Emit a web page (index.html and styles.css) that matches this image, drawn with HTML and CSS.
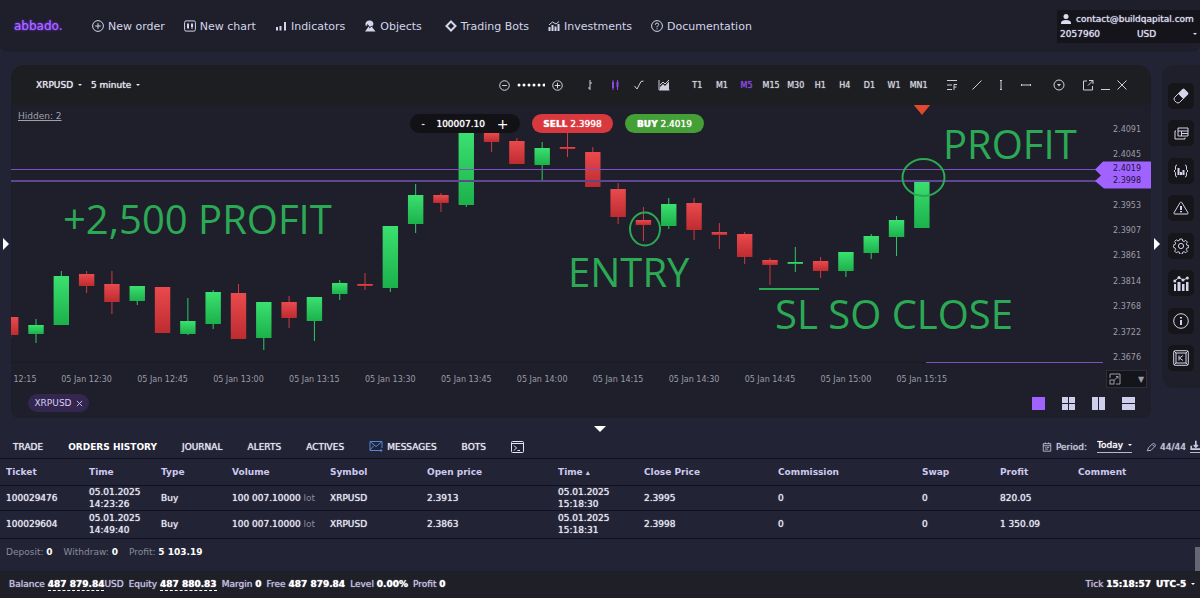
FILE: index.html
```html
<!DOCTYPE html>
<html lang="en">
<head>
    <meta charset="UTF-8">
    <meta name="viewport" content="width=device-width, initial-scale=1.0">
    <title>abbado. terminal</title>
    <link rel="stylesheet" href="styles.css">
</head>
<body>
    <header class="topbar">
        <a class="logo" href="#">abbado.</a>
        <nav>
            <a href="#"><svg class="icon" viewBox="0 0 12 12"><circle cx="6" cy="6" r="5.4"/><path d="M6 3.2v5.6M3.2 6h5.6"/></svg>New order</a>
            <a href="#"><svg class="icon" viewBox="0 0 12 12"><rect x=".6" y=".9" width="10.8" height="10.2" rx="1.5"/><path d="M4 3v6M8 3v6"/><path class="fill" d="M3 4h2v4H3zM7 4h2v3H7z"/></svg>New chart</a>
            <a href="#"><svg class="icon" viewBox="0 0 12 12"><path class="fill" d="M1 7h2v3.500H1zM4.500 6h2v4.500h-2zM9 2h2v8.500H9z"/></svg>Indicators</a>
            <a href="#"><svg class="icon" viewBox="0 0 12 12"><path class="fill" d="M1.500 5a4 4 0 0 1 8-1L8 7l3.500 4.500H1L5 6 3 5 2 6.500z"/><path class="cut" d="M5.500 6.500L3 4.500M5 8l3-2"/></svg>Objects</a>
            <a class="bots" href="#"><svg class="icon" viewBox="0 0 12 12"><path class="thick" d="M6 1.500L10.500 6 6 10.500 1.500 6z"/></svg>Trading Bots</a>
            <a href="#"><svg class="icon" viewBox="0 0 12 12"><path class="fill" d="M.5 7h2v4h-2zM3.500 5h2v6h-2zM6.500 6.500h2V11h-2zM9.500 4h2v7h-2z"/><path d="M1 5l3.500-3L8 4l3-2.500"/></svg>Investments</a>
            <a href="#"><svg class="icon" viewBox="0 0 12 12"><circle cx="6" cy="6" r="5.4"/><path d="M4.300 4.800Q4.400 3 6 3T7.700 4.700Q7.600 5.500 6.500 6Q6 6.300 6 7.300M6 8.300v1"/></svg>Documentation</a>
        </nav>
        <div class="account">
            <div class="email"><svg class="icon" viewBox="0 0 12 12"><circle class="fill" cx="6" cy="3.500" r="2.500"/><path class="fill" d="M1 11V9.500Q1.500 7 6 7t5 2.500V11z"/></svg>contact@buildqapital.com</div>
            <div class="wallet">
                <span>2057960</span>
                <label class="pick"><select aria-label="Account currency"><option>USD</option></select></label>
            </div>
        </div>
    </header>

    <main class="workspace">
        <button class="edge" aria-label="Open left panel"><svg viewBox="0 0 6 12"><path d="M0 0l6 6-6 6z"/></svg></button>

        <section class="panel">
            <div class="toolbar">
                <label class="pick"><select aria-label="Symbol"><option>XRPUSD</option></select></label>
                <label class="pick"><select aria-label="Period"><option>5 minute</option></select></label>
                <div class="zoom">
                    <button aria-label="Zoom out"><svg viewBox="0 0 12 12"><circle cx="6" cy="6" r="5.2"/><path d="M3.500 6h5"/></svg></button>
                    <svg class="dots" viewBox="0 0 28 4"><path d="M2 2h.01M7 2h.01M12 2h.01M17 2h.01M22 2h.01M27 2h.01"/></svg>
                    <button aria-label="Zoom in"><svg viewBox="0 0 12 12"><circle cx="6" cy="6" r="5.2"/><path d="M3 6h6M6 3v6"/></svg></button>
                </div>
                <div class="group four">
                    <button aria-label="Bars"><svg viewBox="0 0 12 12"><path d="M6 1v10M6 4h2M4 9h2"/></svg></button>
                    <button class="active" aria-label="Candles"><svg viewBox="0 0 12 12"><path d="M4 1v10M8.500 1v10"/><path class="thick" d="M4 3v6M8.500 3v5"/></svg></button>
                    <button aria-label="Line"><svg viewBox="0 0 12 12"><path d="M1.500 7L4 10l4-7.500 2.500-.5"/></svg></button>
                    <button aria-label="Area"><svg viewBox="0 0 12 12"><path d="M1 1v10h10.500M2 6l3-3 2 2 4-4"/><path class="fill" d="M2 8l3-3 2 2 4-4.500V11H2z"/></svg></button>
                </div>
                <div class="group ten">
                    <button>T1</button><button>M1</button><button class="active">M5</button><button>M15</button><button>M30</button>
                    <button>H1</button><button>H4</button><button>D1</button><button>W1</button><button>MN1</button>
                </div>
                <div class="group four">
                    <button aria-label="Fibonacci"><svg viewBox="0 0 12 12"><path d="M1 1.500h10M1 6h5M1 10.500h5M8 11V5.500h3M8 8h2.500"/></svg></button>
                    <button aria-label="Trend line"><svg viewBox="0 0 12 12"><path d="M1.500 10.500l9-9"/></svg></button>
                    <button aria-label="Vertical line"><svg viewBox="0 0 12 12"><path d="M6 1v10M5 1.500h2M5 10.500h2"/></svg></button>
                    <button aria-label="Horizontal line"><svg viewBox="0 0 12 12"><path d="M1 6h10M1.500 5v2M10.500 5v2"/></svg></button>
                </div>
                <div class="group one">
                    <button aria-label="More tools"><svg viewBox="0 0 12 12"><circle cx="6" cy="6" r="5"/><path class="fill" d="M4 5h4L6 7.500z"/></svg></button>
                </div>
                <div class="group three">
                    <button aria-label="Detach"><svg viewBox="0 0 12 12"><path d="M5 2H1.500v9h9V7M7 1.500h4V5M11 1.500L6 6.500"/></svg></button>
                    <button aria-label="Minimize"><svg viewBox="0 0 12 12"><path d="M2 10.500h9"/></svg></button>
                    <button aria-label="Close"><svg viewBox="0 0 12 12"><path d="M1.500 1.500l9 9M10.500 1.500l-9 9"/></svg></button>
                </div>
            </div>

            <div class="chart">
                <svg class="plot" viewBox="11 105 1140 285" role="img" aria-label="XRPUSD candles">
                    <defs>
                        <linearGradient id="up" x1="0" y1="0" x2="0" y2="1"><stop offset="0" stop-color="#3be070"/><stop offset="1" stop-color="#1cb14b"/></linearGradient>
                        <linearGradient id="down" x1="0" y1="0" x2="0" y2="1"><stop offset="0" stop-color="#ea4a4d"/><stop offset="1" stop-color="#bd2c30"/></linearGradient>
                    </defs>
                    <path class="axis-line" d="M11 362.500H1105"/>
                    <g id="candles"></g>
                    <path class="level" d="M11 169.500H1098"/>
                    <path class="level bid" d="M11 181H1098"/>
                    <path class="level" d="M926 362.500H1103"/>
                    <path class="tag" d="M1095 169.500l8-8h48v27h-47l-9-7.500 6-5.500z"/>
                    <path class="marker" d="M913 104h18l-9 11z"/>
                    <g id="prices"></g>
                    <g id="times"></g>
                    <g class="drawing">
                        <ellipse cx="645" cy="229" rx="15" ry="16.500"/>
                        <ellipse cx="923.500" cy="177.500" rx="21" ry="18.500"/>
                        <path d="M759 289h60"/>
                    </g>
                    <g class="note">
                        <text x="63" y="234">+2,500 PROFIT</text>
                        <text x="568" y="287">ENTRY</text>
                        <text x="775" y="329">SL SO CLOSE</text>
                        <text x="943" y="159">PROFIT</text>
                    </g>
                </svg>
                <a class="hidden-count" href="#">Hidden: 2</a>
                <div class="deal">
                    <div class="volume">
                        <button aria-label="Less">-</button>
                        <input type="text" value="100007.10" aria-label="Volume">
                        <button class="plus" aria-label="More">+</button>
                    </div>
                    <button class="sell"><b>SELL</b> 2.3998</button>
                    <button class="buy"><b>BUY</b> 2.4019</button>
                </div>
                <label class="scale">
                    <svg viewBox="0 0 12 12"><path d="M1 5V1h10v10H7M7 3.500h2v2M9 3.500L5 7.500"/><rect x="1" y="7" width="4" height="4"/></svg>
                    <select aria-label="Chart scale"><option>▼</option></select>
                </label>
            </div>

            <div class="panel-foot">
                <button class="chip">XRPUSD <svg viewBox="0 0 8 8"><path d="M1 1l6 6M7 1L1 7"/></svg></button>
                <div class="layouts">
                    <button class="active" aria-label="Single"><svg viewBox="0 0 13 13"><path d="M0 0h13v13H0z"/></svg></button>
                    <button aria-label="Grid"><svg viewBox="0 0 13 13"><path d="M0 0h6v6H0zM7 0h6v6H7zM0 7h6v6H0zM7 7h6v6H7z"/></svg></button>
                    <button aria-label="Columns"><svg viewBox="0 0 13 13"><path d="M0 0h6v13H0zM7 0h6v13H7z"/></svg></button>
                    <button aria-label="Rows"><svg viewBox="0 0 13 13"><path d="M0 0h13v6H0zM0 7h13v6H0z"/></svg></button>
                </div>
            </div>
        </section>

        <button class="edge right" aria-label="Open right panel"><svg viewBox="0 0 6 12"><path d="M0 0l6 6-6 6z"/></svg></button>

        <aside class="sidebar">
            <button aria-label="Eraser"><svg viewBox="0 0 16 16"><path d="M1.500 9.500l4-4 5 5-4 4q-1.500 1-3 0l-2-2q-1-1.500 0-3z"/><path class="fill" d="M5 5.500L9.500 1q1-.8 2 0L15 4.500q.8 1 0 2L10.500 11z"/></svg></button>
            <button aria-label="Windows"><svg viewBox="0 0 16 16"><path d="M5 3h10v8H5zM5 6h10M8.500 6v5M8.500 8.500H15M3 6H2v8h10v-1.500"/></svg></button>
            <button aria-label="Indicators"><svg viewBox="0 0 16 16"><path d="M4 2Q2.500 2 2.500 4v2.500L1 8l1.500 1.500V12q0 2 1.500 2M12 2q1.500 0 1.500 2v2.500L15 8l-1.500 1.500V12q0 2-1.500 2"/><path class="thick" d="M5.500 5v7M8 9v3M10.500 7v5"/></svg></button>
            <button aria-label="Warnings"><svg viewBox="0 0 16 16"><path d="M8 2q.5 0 1 .8l6 10q.3 1.200-.8 1.200H1.800Q.7 14 1 12.800l6-10Q7.500 2 8 2z"/><path class="thick" d="M8 6v4M8 11v1.300"/></svg></button>
            <button aria-label="Settings"><svg viewBox="0 0 16 16"><path d="M6.800 1h2.400l.4 1.900 1.500.6 1.600-1.100 1.700 1.700-1.100 1.600.6 1.500 1.900.4v2l-1.900.4-.6 1.500 1.100 1.600-1.700 1.700-1.600-1.100-1.500.6-.4 1.900H6.800l-.4-1.900-1.500-.6-1.600 1.100-1.700-1.700 1.100-1.600-.6-1.500L.2 9V7.200l1.900-.6.6-1.500-1.100-1.600 1.700-1.700 1.600 1.100 1.500-.6z"/><circle cx="8" cy="8" r="2.600"/></svg></button>
            <button aria-label="Statistics"><svg viewBox="0 0 16 16"><path class="fill" d="M1 9h2v7H1zM4.500 7h3v9h-3zM9 9h2.500v7H9zM13 7h2.500v9H13z"/><path d="M1.500 6L6 2.500 10 5l4.500-2"/><circle class="fill" cx="1.800" cy="6" r="1.500"/><circle class="fill" cx="6" cy="2.500" r="1.500"/><circle class="fill" cx="10" cy="5" r="1.500"/><circle class="fill" cx="14.300" cy="3" r="1.500"/></svg></button>
            <button aria-label="Info"><svg viewBox="0 0 16 16"><circle cx="8" cy="8" r="7.300"/><path class="thick" d="M8 7v5M8 4v1.500"/></svg></button>
            <button aria-label="Hotkeys"><svg viewBox="0 0 16 16"><rect x=".7" y=".7" width="14.600" height="14.600" rx="1.500"/><rect x="3" y="3" width="10" height="10"/><path d="M1 1l2 2M15 1l-2 2M1 15l2-2M15 15l-2-2M6 5.500v5M10 5.500L6.500 8l3.500 2.500"/></svg></button>
        </aside>
    </main>

    <button class="collapse" aria-label="Collapse orders"><svg viewBox="0 0 12 6"><path d="M0 0h12L6 6z"/></svg></button>

    <section class="orders">
        <div class="tabs">
            <button>TRADE</button>
            <button class="current">ORDERS HISTORY</button>
            <button>JOURNAL</button>
            <button>ALERTS</button>
            <button>ACTIVES</button>
            <button class="mail"><svg viewBox="0 0 14 11"><path d="M9 9.500H1v-9h12V7M1 .5l6 5 6-5M1 9l4-4.500M9 9.500h4M11.500 8l1.500 1.500-1.500 1.500"/></svg>MESSAGES</button>
            <button>BOTS</button>
            <button aria-label="Console"><svg class="console" viewBox="0 0 13 12"><rect x=".5" y=".5" width="12" height="11" rx="1"/><path d="M.5 2.500h12M3 4.500L5.500 7 3 9.500M6.500 9.500H9"/></svg></button>
            <div class="period">
                <svg class="icon" viewBox="0 0 12 12"><path d="M1.500 2h9v9h-9zM1.500 4.500h9M4 .5v2M8 .5v2M3.500 6.500h1M5.500 6.500h3M3.500 8.500h4"/></svg>
                <span>Period:</span>
                <label class="pick today"><select aria-label="Period filter"><option>Today</option></select></label>
                <svg class="icon" viewBox="0 0 12 12"><path d="M1.500 10.500L3 7l5-5q1-1 2.500.5t.5 2.500l-5 5zM7.500 3L10 5.500"/></svg>
                <span>44/44</span>
                <a class="download" href="#" aria-label="Download"><svg class="icon" viewBox="0 0 12 12"><path class="thick" d="M1.500 7v4H12M7 1v7M4.500 6L7 8.500 9.500 6"/></svg></a>
            </div>
        </div>

        <table>
            <colgroup>
                <col class="c-ticket"><col class="c-time"><col class="c-type"><col class="c-volume"><col class="c-symbol"><col class="c-open">
                <col class="c-close-time"><col class="c-close"><col class="c-commission"><col class="c-swap"><col class="c-profit"><col>
            </colgroup>
            <thead>
                <tr>
                    <th>Ticket</th><th>Time</th><th>Type</th><th>Volume</th><th>Symbol</th><th>Open price</th>
                    <th>Time <small>▴</small></th><th>Close Price</th><th>Commission</th><th>Swap</th><th>Profit</th><th>Comment</th>
                </tr>
            </thead>
            <tbody>
                <tr>
                    <td>100029476</td><td>05.01.2025<br>14:23:26</td><td>Buy</td><td>100 007.10000 <i>lot</i></td><td>XRPUSD</td><td>2.3913</td>
                    <td>05.01.2025<br>15:18:30</td><td>2.3995</td><td>0</td><td>0</td><td>820.05</td><td></td>
                </tr>
                <tr>
                    <td>100029604</td><td>05.01.2025<br>14:49:40</td><td>Buy</td><td>100 007.10000 <i>lot</i></td><td>XRPUSD</td><td>2.3863</td>
                    <td>05.01.2025<br>15:18:31</td><td>2.3998</td><td>0</td><td>0</td><td>1 350.09</td><td></td>
                </tr>
            </tbody>
        </table>

        <div class="totals">
            <span>Deposit: <b>0</b></span>
            <span>Withdraw: <b>0</b></span>
            <span>Profit: <b>5 103.19</b></span>
            <div class="scrollbar"></div>
        </div>
    </section>

    <footer class="status">
        <span>Balance <b class="dashed">487 879.84</b>USD</span>
        <span>Equity <b class="dashed">487 880.83</b></span>
        <span>Margin <b>0</b></span>
        <span>Free <b>487 879.84</b></span>
        <span>Level <b>0.00%</b></span>
        <span>Profit <b>0</b></span>
        <span class="tick">Tick <b>15:18:57</b></span>
        <label class="pick"><select aria-label="Time zone"><option>UTC-5</option></select></label>
    </footer>

    <script>
        // body top, body bottom, wick top, wick bottom, rising?
        const candles = [
            [317, 335, 317, 338, 0], [325, 334, 319, 343, 1], [276, 325, 271, 325, 1], [274, 286, 271, 293, 0],
            [284, 302, 271, 314, 0], [286, 301, 286, 305, 1], [287, 333, 287, 333, 0], [321, 334, 298, 335, 1],
            [292, 324, 290, 329, 1], [293, 339, 284, 339, 0], [302, 338, 302, 350, 1], [302, 318, 296, 328, 0],
            [297, 321, 297, 341, 1], [283, 294, 280, 300, 1], [284, 286, 273, 290, 0], [226, 288, 226, 292, 1],
            [195, 224, 184, 233, 1], [195, 203, 193, 212, 0], [133, 205, 133, 207, 1], [133, 142, 133, 152, 0],
            [141, 164, 138, 164, 0], [148, 165, 142, 180, 1], [147, 149, 133, 157, 0], [152, 187, 147, 187, 0],
            [189, 217, 183, 224, 0], [220, 225, 207, 241, 0], [204, 226, 198, 229, 1], [203, 230, 198, 240, 0],
            [232, 235, 223, 249, 0], [234, 257, 232, 264, 0], [260, 265, 258, 285, 0], [262, 264, 247, 272, 1],
            [261, 271, 257, 278, 0], [252, 271, 252, 277, 1], [236, 253, 234, 259, 1], [220, 237, 216, 256, 1],
            [181, 228, 181, 228, 1]
        ];
        const step = 25.31;
        document.getElementById('candles').innerHTML = candles.map((c, i) => {
            const x = 36 + step * (i - 1);
            const side = c[4] ? 'up' : 'down';
            return `<path class="wick ${side}" d="M${x} ${c[2]}V${c[3]}"/>` +
                `<rect x="${x - 7.7}" y="${c[0]}" width="15.4" height="${c[1] - c[0]}" fill="url(#${side})"/>`;
        }).join('');

        const prices = [
            ['2.4091', 132], ['2.4045', 157], ['2.4019', 171], ['2.3998', 183], ['2.3953', 208], ['2.3907', 233],
            ['2.3861', 258], ['2.3814', 284], ['2.3768', 309], ['2.3722', 335], ['2.3676', 360]
        ];
        document.getElementById('prices').innerHTML = prices.map(([label, y]) => {
            const tagged = label === '2.4019' || label === '2.3998';
            return `<text class="${tagged ? 'tagged' : ''}" x="1113" y="${y}">${label}</text>`;
        }).join('');

        const times = ['12:30', '12:45', '13:00', '13:15', '13:30', '13:45', '14:00', '14:15', '14:30', '14:45', '15:00', '15:15'];
        document.getElementById('times').innerHTML = '<text x="25" y="382">12:15</text>' +
            times.map((t, i) => `<text x="${86.6 + step * 3 * i}" y="382">05 Jan ${t}</text>`).join('');
    </script>
</body>
</html>
```
FILE: styles.css
```css
* {
    box-sizing: border-box;
}
body {
    margin: 0;
    min-height: 100vh;
    display: flex;
    flex-direction: column;
    background-color: #222436;
    color: #e6e6f2;
    font-family: Verdana, "DejaVu Sans", sans-serif;
    font-size: 9px;
    overflow-x: hidden;
}
button, input, select {
    font: inherit;
    color: inherit;
    text-shadow: inherit;
    background: none;
    border: 0;
    padding: 0;
    margin: 0;
}
button {
    cursor: pointer;
    white-space: nowrap;
}
a {
    color: inherit;
    text-decoration: none;
}
svg {
    display: block;
    fill: none;
    stroke: currentColor;
}
svg .fill {
    fill: currentColor;
    stroke: none;
}
svg .thick {
    stroke-width: 2;
}
.icon {
    width: 12px;
    height: 12px;
    flex: none;
}
.icon .cut {
    stroke: #1f1f2b;
}
.pick {
    display: flex;
    align-items: center;
    gap: 4px;
}
.pick select {
    appearance: none;
}
.pick::after {
    content: "";
    border: 2px solid transparent;
    border-top-color: currentColor;
    border-bottom: 0;
}

/* top bar */
.topbar {
    height: 52px;
    display: flex;
    align-items: center;
    padding-left: 14px;
    background-color: #1f1f2b;
    border-radius: 0 0 8px 8px;
}
.logo {
    width: 78px;
    font-size: 12px;
    color: #a56bff;
    text-shadow: 0 0 1px #8a3dff, 0 0 3px #7a35e8;
}
nav {
    display: flex;
    gap: 19px;
    font-size: 11px;
    color: #d3d5ea;
}
nav a {
    display: flex;
    align-items: center;
    gap: 4px;
    white-space: nowrap;
}
nav .bots {
    margin-left: 4px;
}
.account {
    width: 143px;
    height: 33px;
    margin-left: auto;
    padding: 0 3px;
    background-color: #14141a;
    display: flex;
    flex-direction: column;
    justify-content: space-evenly;
    color: #dcdcf0;
    text-shadow: 0 0 1px currentColor;
}
.email {
    display: flex;
    align-items: center;
    gap: 4px;
}
.wallet {
    display: flex;
    justify-content: space-between;
}
.wallet .pick {
    gap: 36px;
}

/* chart area */
.workspace {
    margin-top: 13px;
    display: grid;
    grid-template-columns: 11px 1fr 11px 38px;
}
.edge {
    display: flex;
    align-items: center;
    justify-content: center;
    padding-top: 4px;
    color: #fff;
}
.edge svg {
    width: 6px;
    height: 12px;
    fill: currentColor;
    stroke: none;
}
.panel {
    background-color: #1e1f2a;
    border-radius: 14px 14px 8px 8px;
    overflow: hidden;
    min-width: 0;
}
.toolbar {
    height: 40px;
    display: flex;
    align-items: center;
    gap: 9px;
    padding: 0 21px 0 25px;
    background-color: #1c1e21;
    text-shadow: 0 0 1px currentColor;
}
.zoom {
    display: flex;
    align-items: center;
    gap: 7px;
    margin-left: auto;
    margin-right: 6px;
}
.zoom button svg {
    width: 11px;
    height: 11px;
}
.zoom .dots {
    width: 28px;
    height: 4px;
    stroke: #fff;
    stroke-width: 3;
    stroke-linecap: round;
}
.group {
    display: grid;
    grid-auto-flow: column;
    grid-auto-columns: 1fr;
    font-size: 8px;
    color: #d0d0dc;
}
.group button {
    display: flex;
    justify-content: center;
}
.group svg {
    width: 12px;
    height: 12px;
}
.group .active {
    color: #8d4bea;
    text-shadow: 0 0 1px #8d4bea;
}
.one {
    width: 24px;
}
.three {
    width: 50px;
}
.four {
    width: 98px;
}
.ten {
    width: 246px;
}
.chart {
    position: relative;
}
.plot {
    width: 100%;
    height: auto;
    stroke: none;
}
.wick.up {
    stroke: #2fc963;
}
.wick.down {
    stroke: #cf3b40;
}
.axis-line {
    stroke: #191a23;
}
.level {
    stroke: #7a52bd;
}
.level.bid {
    stroke: #5f4690;
    stroke-width: 2;
}
.tag {
    fill: #a163ff;
}
.marker {
    fill: #e2482d;
}
#prices, #times {
    fill: #9b9ca8;
    font-size: 8px;
}
#times {
    text-anchor: middle;
}
#prices .tagged {
    fill: #1d1238;
}
.drawing {
    stroke: #2ca954;
    stroke-width: 2;
}
.note {
    fill: #2ca954;
    font-family: "Segoe UI", "Open Sans", sans-serif;
    font-size: 40px;
}
.hidden-count {
    position: absolute;
    left: 7px;
    top: 6px;
    color: #a0a0ac;
    text-decoration: underline;
}
.deal {
    position: absolute;
    left: 399px;
    top: 9px;
    display: flex;
    gap: 12px;
    color: #fff;
    text-shadow: 0 0 1px #fff;
}
.volume, .deal > button {
    height: 19px;
    border-radius: 10px;
}
.volume {
    width: 110px;
    display: flex;
    align-items: center;
    justify-content: center;
    gap: 6px;
    background-color: #121216;
}
.volume input {
    width: 60px;
    text-align: center;
}
.volume .plus {
    font-size: 14px;
    line-height: 14px;
    text-shadow: none;
}
.sell {
    width: 81px;
    background-color: #d8393f;
}
.buy {
    width: 79px;
    background-color: #459f37;
}
.scale {
    position: absolute;
    right: 4px;
    bottom: 2px;
    width: 41px;
    height: 18px;
    padding: 0 1px 0 2px;
    display: flex;
    align-items: center;
    justify-content: space-between;
    background-color: #14151a;
    border: 1px solid #2a3038;
    color: #9a9aa6;
}
.scale svg {
    width: 12px;
    height: 12px;
}
.scale select {
    appearance: none;
    font-size: 8px;
}
.panel-foot {
    height: 28px;
    display: flex;
    justify-content: space-between;
    padding: 4px 16px 0 17px;
}
.chip {
    width: 61px;
    height: 18px;
    border-radius: 9px;
    display: flex;
    align-items: center;
    justify-content: center;
    gap: 4px;
    background-color: #33274f;
    color: #d8cdf5;
}
.chip svg {
    width: 7px;
    height: 7px;
}
.layouts {
    display: flex;
    gap: 17px;
    height: 18px;
    color: #cfcfec;
}
.layouts .active {
    color: #a163ff;
}
.layouts svg {
    width: 13px;
    height: 13px;
    fill: currentColor;
    stroke: none;
}
.sidebar {
    height: 323px;
    padding: 18px 5px 17px;
    display: flex;
    flex-direction: column;
    align-items: center;
    justify-content: space-between;
    background-color: #1f1f2b;
    border-radius: 12px 0 0 12px;
}
.sidebar button {
    width: 26px;
    height: 26px;
    border-radius: 5px;
    display: flex;
    align-items: center;
    justify-content: center;
    background-color: #15151a;
    color: #d4d4ea;
}
.sidebar svg {
    width: 16px;
    height: 16px;
}

/* orders */
.collapse {
    height: 17px;
    padding-top: 4px;
    display: flex;
    align-items: center;
    justify-content: center;
    color: #fff;
}
.collapse svg {
    width: 12px;
    height: 6px;
    fill: currentColor;
    stroke: none;
}
.tabs {
    height: 24px;
    display: flex;
    align-items: center;
    gap: 25px;
    padding-left: 13px;
    text-shadow: 0 0 1px currentColor;
    border-bottom: 1px solid #0f1020;
}
.tabs .current {
    font-weight: bold;
    color: #fff;
    text-shadow: none;
}
.mail {
    display: flex;
    align-items: center;
    gap: 4px;
}
.mail svg {
    width: 14px;
    height: 11px;
    color: #4f86d8;
}
.console {
    width: 13px;
    height: 12px;
}
.period {
    display: flex;
    align-items: center;
    gap: 4px;
    margin-left: auto;
    color: #c9cade;
}
.period .icon {
    width: 10px;
    height: 10px;
}
.today {
    margin: 0 10px 0 6px;
    padding-bottom: 2px;
    color: #fff;
    border-bottom: 1px solid #b9b9c8;
}
.download {
    border-bottom: 1px solid #b9b9c8;
    padding-bottom: 2px;
}
table {
    width: 100%;
    table-layout: fixed;
    border-collapse: collapse;
    line-height: 12px;
}
th, td {
    padding: 0 0 0 6px;
    text-align: left;
    white-space: nowrap;
    border-bottom: 1px solid #0f1020;
}
th {
    height: 26px;
    color: #cfc9ee;
}
th small {
    font-size: 8px;
    line-height: 1;
}
td {
    height: 25px;
    text-shadow: 0 0 1px currentColor;
}
tr:last-child td {
    height: 28px;
}
td i {
    font-style: normal;
    color: #8a8b9b;
    text-shadow: none;
}
.c-ticket { width: 83px; }
.c-time { width: 72px; }
.c-type { width: 71px; }
.c-volume { width: 98px; }
.c-symbol { width: 97px; }
.c-open { width: 131px; }
.c-close-time { width: 86px; }
.c-close { width: 134px; }
.c-commission { width: 144px; }
.c-swap { width: 78px; }
.c-profit { width: 78px; }
.totals {
    height: 32px;
    display: flex;
    align-items: flex-start;
    gap: 11px;
    padding: 8px 0 0 6px;
    color: #8a8b9b;
}
.totals b {
    color: #fff;
}
.scrollbar {
    width: 5px;
    height: 24px;
    margin-left: auto;
    background-color: #666775;
}
.status {
    flex: 1;
    min-height: 28px;
    display: flex;
    align-items: center;
    gap: 5px;
    padding: 0 5px 0 9px;
    background-color: #1f1f28;
    border-bottom: 1px solid #08080c;
    color: #c5c0e2;
    text-shadow: 0 0 1px currentColor;
    white-space: nowrap;
}
.status b {
    color: #fff;
}
.status .dashed {
    padding-bottom: 1px;
    border-bottom: 1px dashed #fff;
}
.status .tick {
    margin-left: auto;
}
.status .pick {
    color: #fff;
    font-weight: bold;
}
```
